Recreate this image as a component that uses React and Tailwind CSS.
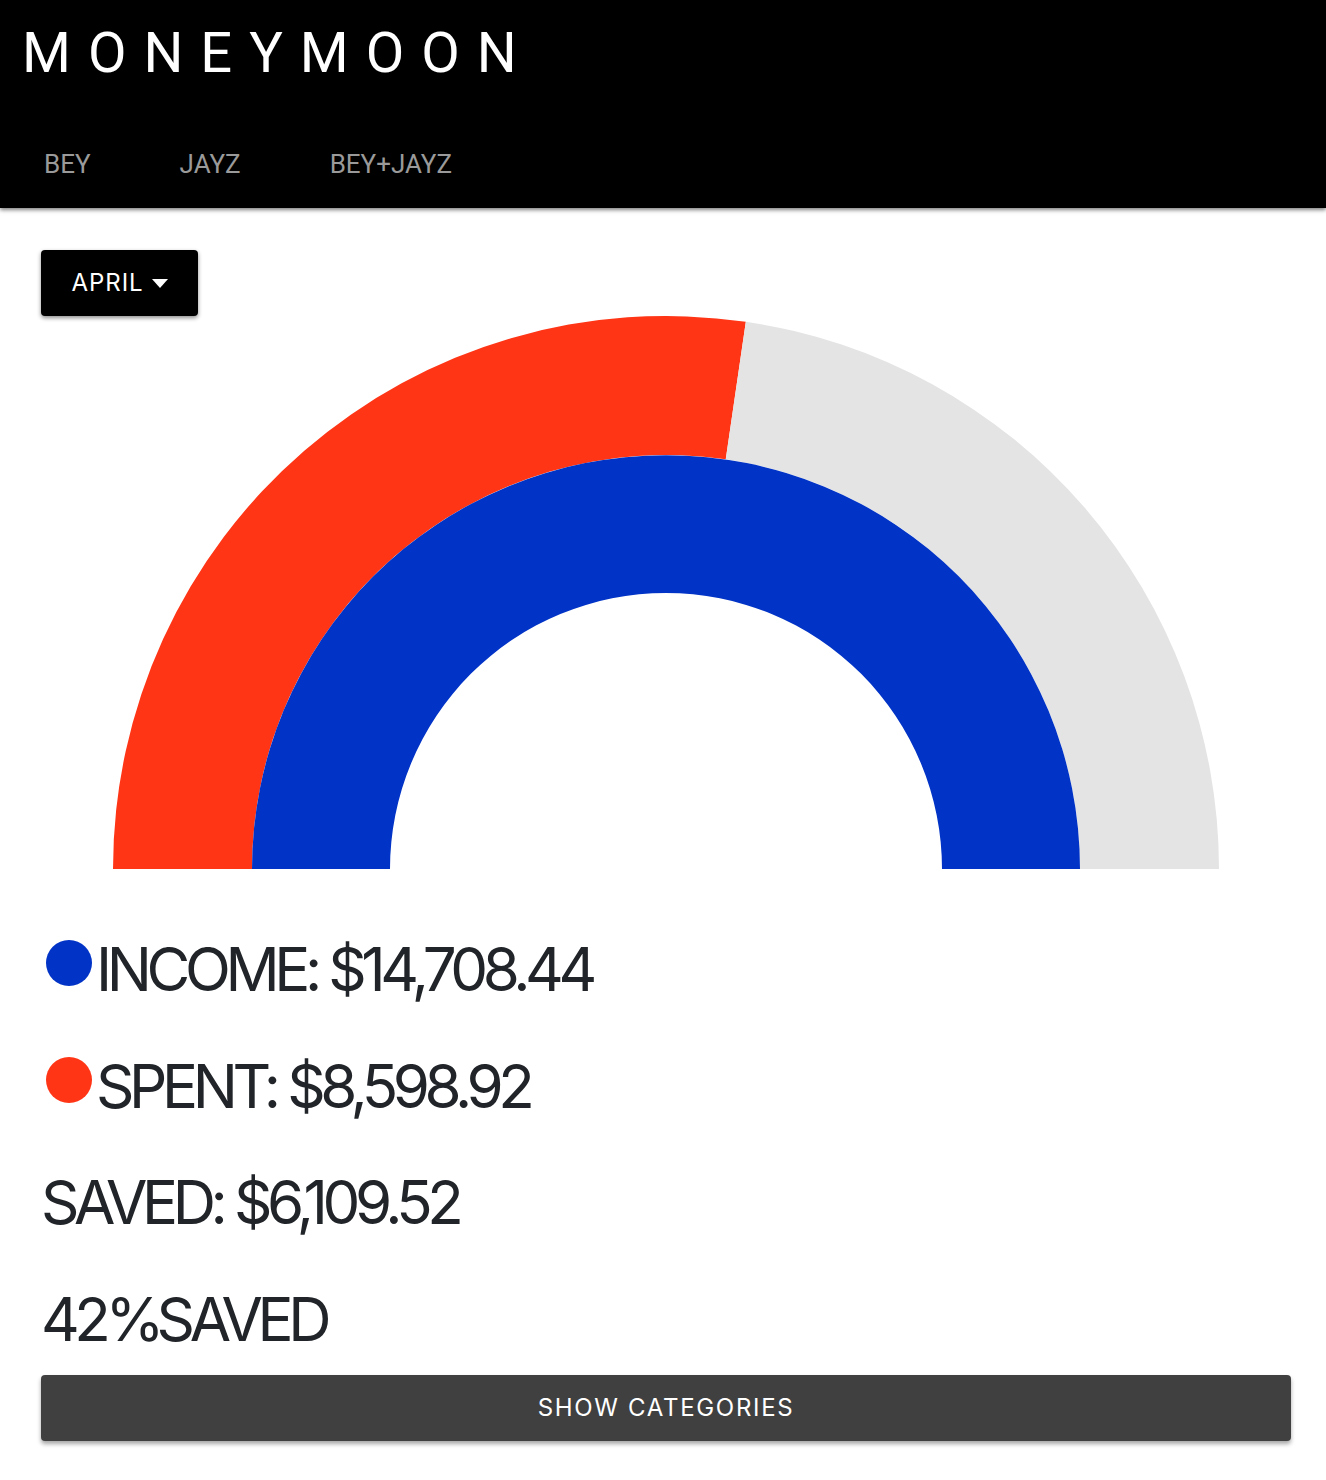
import { useState } from "react";

const RED = "#ff3516";
const BLUE = "#0033c6";
const GREY = "#e4e4e4";

// half donut, center (553,553); outer ring 553..414, inner ring 414..276
function arc(r0, r1, a0, a1) {
  const p = (r, a) => {
    const rad = (a * Math.PI) / 180;
    return [553 + r * Math.cos(rad), 553 - r * Math.sin(rad)];
  };
  const [x0, y0] = p(r1, a0);
  const [x1, y1] = p(r1, a1);
  const [x2, y2] = p(r0, a1);
  const [x3, y3] = p(r0, a0);
  return `M${x0} ${y0} A${r1} ${r1} 0 0 1 ${x1} ${y1} L${x2} ${y2} A${r0} ${r0} 0 0 0 ${x3} ${y3} Z`;
}

function MoonChart({ spentAngle }) {
  const split = 180 - spentAngle;
  return (
    <svg width="1106" height="553" viewBox="0 0 1106 553" className="block">
      <path d={arc(414, 553, 180, split)} fill={RED} />
      <path d={arc(414, 553, split, 0)} fill={GREY} />
      <path d={arc(276, 414, 180, 0)} fill={BLUE} />
    </svg>
  );
}

function Stat({ dot, className = "", children }) {
  return (
    <div className="flex items-start">
      {dot && <span className="w-[46px] h-[46px] rounded-full mt-[7px] ml-[5px] mr-[4px] shrink-0" style={{ background: dot }} />}
      <span className={`text-[60px] leading-[72px] tracking-[-0.09em] text-[#212529] ${className}`}>{children}</span>
    </div>
  );
}

export default function App() {
  const [tab, setTab] = useState("BEY");
  return (
    <div className="min-h-[1480px] bg-white" style={{ fontFamily: "Inter, 'Liberation Sans', sans-serif" }}>
      {/* Header */}
      <header className="bg-black h-[208px] shadow-[0_2px_4px_rgba(0,0,0,0.5)] relative z-10" style={{ fontFamily: "Roboto, 'Liberation Sans', sans-serif" }}>
        <div className="h-[120px] pt-[25px] pl-[22px]">
          <h1 className="text-white text-[56px] leading-[56px] tracking-[17px] font-normal">MONEYMOON</h1>
        </div>
        <nav className="h-[88px] flex items-center gap-[89px] pl-[44px]">
          {["BEY", "JAYZ", "BEY+JAYZ"].map((t) => (
            <button key={t} onClick={() => setTab(t)} className="text-[26px] leading-[26px] text-[#9a9a9a]">
              {t}
            </button>
          ))}
        </nav>
      </header>

      <main className="pl-[41px] pr-[35px] pt-[42px]">
        <button className="w-[157px] h-[66px] bg-black text-white rounded-[4px] shadow-[0_2px_4px_rgba(0,0,0,0.45)] flex items-center justify-center gap-[8px] text-[24px] tracking-[0.04em]">
          APRIL
          <svg width="16" height="9" viewBox="0 0 16 9"><path d="M0 0h16L8 9z" fill="white" /></svg>
        </button>

        <div className="flex justify-center">
          <MoonChart spentAngle={98.3} />
        </div>

        <div className="pt-[64px] flex flex-col gap-[44.7px]">
          <Stat dot={BLUE}>INCOME: $14,708.44</Stat>
          <Stat dot={RED}>SPENT: $8,598.92</Stat>
          <Stat>SAVED: $6,109.52</Stat>
          <Stat className="[word-spacing:-14px]">42% SAVED</Stat>
        </div>

        <button className="mt-[20px] w-full h-[66px] bg-[#404040] text-white rounded-[4px] shadow-[0_3px_4px_rgba(0,0,0,0.35)] text-[24px] tracking-[0.07em]">
          SHOW CATEGORIES
        </button>
      </main>
    </div>
  );
}
